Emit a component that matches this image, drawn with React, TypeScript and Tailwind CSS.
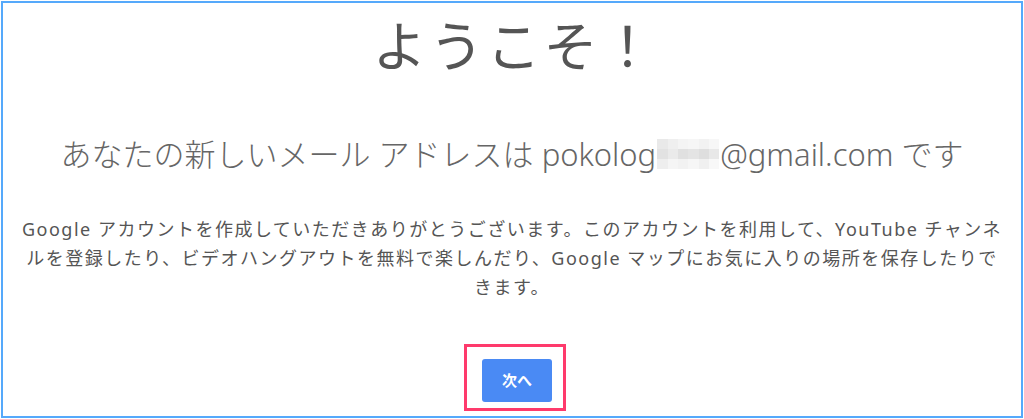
import React from "react";

const font = { fontFamily: '"Noto Sans", "Noto Sans CJK JP", sans-serif' } as React.CSSProperties;

export default function App() {
  return (
    <div className="w-[1024px] h-[419px] bg-white p-[1px]" style={font}>
      <div className="h-full border-2 border-[#55a9fb] flex flex-col items-center">
        <h1 className="mt-[11px] text-[54px] leading-[64px] text-[#555555] font-normal tracking-[3px] pl-[6px]">
          ようこそ！
        </h1>
        <div className="mt-[56px] flex items-center text-[31px] leading-[40px] text-[#666666] font-light">
          <span>あなたの新しいメール アドレスは pokolog</span>
          <span className="inline-grid grid-cols-6 grid-rows-3 w-[62px] h-[30px] mx-[1px] opacity-80">
            <span className="bg-[#e4e4e4]" />
            <span className="bg-[#ececec]" />
            <span className="bg-[#f2f2f2]" />
            <span className="bg-[#f4f4f4]" />
            <span className="bg-[#efefef]" />
            <span className="bg-[#f6f6f6]" />
            <span className="bg-[#dcdcdc]" />
            <span className="bg-[#e6e6e6]" />
            <span className="bg-[#d9d9d9]" />
            <span className="bg-[#dedede]" />
            <span className="bg-[#d6d6d6]" />
            <span className="bg-[#e3e3e3]" />
            <span className="bg-[#ebebeb]" />
            <span className="bg-[#f3f3f3]" />
            <span className="bg-[#f0f0f0]" />
            <span className="bg-[#f5f5f5]" />
            <span className="bg-[#ededed]" />
            <span className="bg-[#f7f7f7]" />
          </span>
          <span>@gmail.com です</span>
        </div>
        <p className="mt-[41px] w-[1010px] text-center text-[18px] leading-[29px] text-[#555555] tracking-[1.5px]">
          Google アカウントを作成していただきありがとうございます。このアカウントを利用して、YouTube チャンネ
          <br />
          ルを登録したり、ビデオハングアウトを無料で楽しんだり、Google マップにお気に入りの場所を保存したりで
          <br />
          きます。
        </p>
        <div className="mt-[42px] ml-[6px] border-[3px] border-[#fe3a6c] w-[102px] h-[67px] flex items-start pt-[12px] pl-[15px]">
          <button className="w-[70px] h-[43px] rounded-[3px] bg-[#4a8af4] text-white text-[15px] font-bold">
            次へ
          </button>
        </div>
      </div>
    </div>
  );
}
